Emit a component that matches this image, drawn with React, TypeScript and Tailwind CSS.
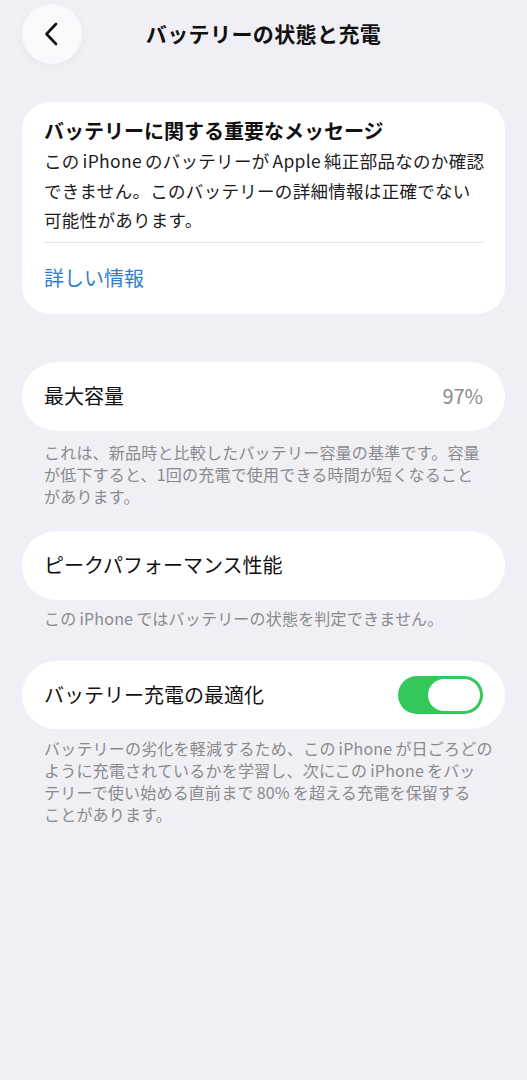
import React from "react";

const font = {
  fontFamily: '"Noto Sans CJK JP", "Noto Sans", sans-serif',
};

function BackButton() {
  return (
    <button className="flex h-[60px] w-[60px] items-center justify-center rounded-full bg-[#f9f9fb] shadow-[0_2px_10px_rgba(0,0,0,0.04)]">
      <svg width="18" height="24" viewBox="0 0 18 24" fill="none">
        <path
          d="M13 2 L3.5 12 L13 22"
          stroke="#111"
          strokeWidth="2.6"
          strokeLinecap="round"
          strokeLinejoin="round"
        />
      </svg>
    </button>
  );
}

function Toggle() {
  return (
    <div className="flex h-[38px] w-[85px] items-center justify-end rounded-full bg-[#34c759] p-[3px]">
      <div className="h-[32px] w-[52px] rounded-full bg-white" />
    </div>
  );
}

// Latin words set inside Japanese text get a little breathing room
function L({ children }: { children: React.ReactNode }) {
  return <span className="mx-[3px]">{children}</span>;
}

function Lines({ lines }: { lines: React.ReactNode[] }) {
  return (
    <>
      {lines.map((line, i) => (
        <span key={i} className="block whitespace-nowrap">
          {line}
        </span>
      ))}
    </>
  );
}

function Footnote({ children, className = "" }: { children: React.ReactNode; className?: string }) {
  return (
    <div className={`px-[22px] text-[16px] leading-[22px] tracking-[0.2px] text-[#8a8a8e] ${className}`}>
      {children}
    </div>
  );
}

export default function App() {
  return (
    <div className="min-h-[1080px] w-full bg-[#f0eff5] px-[22px] pt-[4px]" style={font}>
      {/* header */}
      <div className="grid grid-cols-[60px_1fr_60px] items-center">
        <BackButton />
        <h1 className="text-center text-[21px] font-bold tracking-[0.4px] text-[#111]">
          バッテリーの状態と充電
        </h1>
        <div />
      </div>

      {/* important message card */}
      <div className="mt-[38px] rounded-[28px] bg-white px-[22px] pt-[15px] pb-[22px]">
        <h2 className="text-[20px] font-bold leading-[28px] text-[#111]">
          バッテリーに関する重要なメッセージ
        </h2>
        <div className="mt-[1px] text-[17.5px] leading-[29.5px] tracking-[0.3px] text-[#1c1c1e]">
          <Lines
            lines={[
              <>
                この<L>iPhone</L>のバッテリーが<L>Apple</L>純正部品なのか確認
              </>,
              "できません。このバッテリーの詳細情報は正確でない",
              "可能性があります。",
            ]}
          />
        </div>
        <div className="mt-[7px] h-px bg-[#e3e3e6]" />
        <div className="mt-[21px] text-[20px] leading-[28px] text-[#2f7dd0]">詳しい情報</div>
      </div>

      {/* maximum capacity */}
      <div className="mt-[48px] flex h-[69px] items-center justify-between rounded-full bg-white px-[22px]">
        <span className="text-[20px] text-[#111]">最大容量</span>
        <span className="text-[20px] text-[#8a8a8e]">97%</span>
      </div>
      <Footnote className="mt-[10px]">
        <Lines
          lines={[
            "これは、新品時と比較したバッテリー容量の基準です。容量",
            "が低下すると、1回の充電で使用できる時間が短くなること",
            "があります。",
          ]}
        />
      </Footnote>

      {/* peak performance */}
      <div className="mt-[24px] flex h-[69px] items-center rounded-full bg-white px-[22px]">
        <span className="text-[20px] text-[#111]">ピークパフォーマンス性能</span>
      </div>
      <Footnote className="mt-[7px]">
        <Lines
          lines={[
            <>
              この<L>iPhone</L>ではバッテリーの状態を判定できません。
            </>,
          ]}
        />
      </Footnote>

      {/* optimized charging */}
      <div className="mt-[32px] flex h-[68px] items-center justify-between rounded-full bg-white px-[22px]">
        <span className="text-[20px] text-[#111]">バッテリー充電の最適化</span>
        <Toggle />
      </div>
      <Footnote className="mt-[8px]">
        <Lines
          lines={[
            <>
              バッテリーの劣化を軽減するため、この<L>iPhone</L>が日ごろどの
            </>,
            <>
              ように充電されているかを学習し、次にこの<L>iPhone</L>をバッ
            </>,
            <>
              テリーで使い始める直前まで<L>80%</L>を超える充電を保留する
            </>,
            "ことがあります。",
          ]}
        />
      </Footnote>
    </div>
  );
}
